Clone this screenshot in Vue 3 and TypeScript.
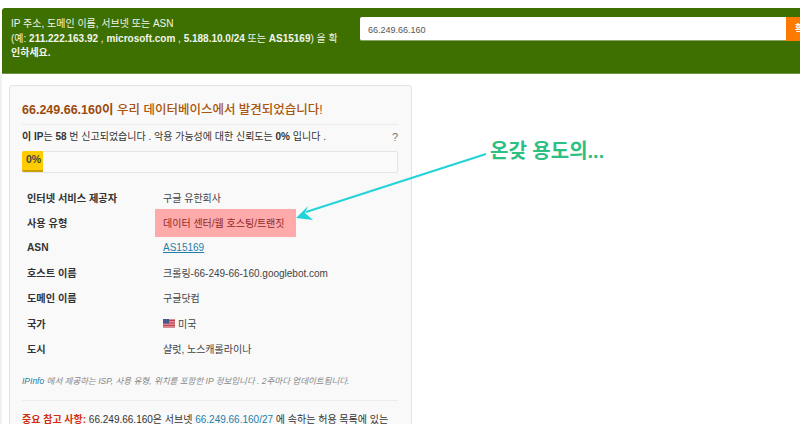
<script setup lang="ts">
interface Row { label: string; value: string; kind?: 'hl' | 'link' | 'flag' }
const rows: Row[] = [
  { label: '인터넷 서비스 제공자', value: '구글 유한회사' },
  { label: '사용 유형', value: '데이터 센터/웹 호스팅/트랜짓', kind: 'hl' },
  { label: 'ASN', value: 'AS15169', kind: 'link' },
  { label: '호스트 이름', value: '크롤링-66-249-66-160.googlebot.com' },
  { label: '도메인 이름', value: '구글닷컴' },
  { label: '국가', value: '미국', kind: 'flag' },
  { label: '도시', value: '샬럿, 노스캐롤라이나' },
]
</script>

<template>
  <div class="page">
    <header class="hero">
      <p class="hero-text">
        IP 주소, 도메인 이름, 서브넷 또는 ASN<br />
        (예: <b>211.222.163.92</b> , <b>microsoft.com</b> , <b>5.188.10.0/24</b> 또는 <b>AS15169</b>) 을 확<br />
        <b>인하세요.</b>
      </p>
      <div class="search">
        <div class="input">66.249.66.160</div>
        <div class="btn">확인</div>
      </div>
    </header>

    <main class="body">
      <section class="card">
        <h3 class="title"><b>66.249.66.160이</b> 우리 데이터베이스에서 발견되었습니다!</h3>
        <div class="summary">
          <span><b>이 IP</b>는 <b>58</b> 번 신고되었습니다 . 악용 가능성에 대한 신뢰도는 <b>0%</b> 입니다 .</span>
          <span class="q">?</span>
        </div>
        <div class="progress"><div class="bar">0%</div></div>
        <div class="table">
          <div v-for="r in rows" :key="r.label" class="row">
            <div class="label">{{ r.label }}</div>
            <div class="value" :class="r.kind">
              <svg v-if="r.kind === 'flag'" class="flag" viewBox="0 0 12 9" width="12" height="9">
                <rect width="12" height="9" fill="#d98a92" />
                <path d="M0 1.500h12M0 4h12M0 6.500h12" stroke="#c0414f" stroke-width="1" />
                <rect width="6" height="4.500" fill="#4a5a8c" />
              </svg>
              <a v-if="r.kind === 'link'">{{ r.value }}</a>
              <span v-else>{{ r.value }}</span>
            </div>
          </div>
        </div>
        <p class="note"><a>IPInfo</a> 에서 제공하는 ISP, 사용 유형, 위치를 포함한 IP 정보입니다 . 2주마다 업데이트됩니다.</p>
        <p class="important">
          <b>중요 참고 사항:</b> 66.249.66.160은 서브넷 <a>66.249.66.160/27</a> 에 속하는 허용 목록에 있는
        </p>
      </section>
    </main>

    <div class="callout">온갖 용도의...</div>
    <svg class="arrow" width="800" height="424" viewBox="0 0 800 424">
      <path d="M486 154 L306 212" stroke="#22d3d8" stroke-width="2" fill="none" />
      <path d="M296 218 L308 206 L305 213 L313 220 Z" fill="#22d3d8" />
    </svg>
  </div>
</template>

<style scoped>
.page {
  position: relative;
  width: 800px;
  height: 424px;
  overflow: hidden;
  background: #fff;
  padding-top: 8px;
  box-sizing: border-box;
  font-family: "Liberation Sans", "Noto Sans CJK KR", sans-serif;
  color: #333;
}
.hero {
  margin-left: 2px;
  height: 66px;
  background: #3d7000;
  border-radius: 3px 0 0 0;
  display: flex;
  box-sizing: border-box;
  padding: 9px 0 0 9px;
  color: #f2f5ec;
  border-bottom: 1px solid #6f9440;
}
.hero-text {
  margin: 0;
  flex: none;
  width: 349px;
  font-size: 10px;
  line-height: 14.500px;
  white-space: nowrap;
}
.search { display: flex; height: 24px; flex: none; width: 440px; }
.input {
  width: 426px;
  flex: none;
  height: 24px;
  background: #fff;
  border-radius: 2px 0 0 2px;
  font-size: 9px;
  line-height: 26px;
  padding-left: 8px;
  box-sizing: border-box;
  color: #555;
  border-bottom: 1px solid #8aa468;
}
.btn {
  flex: 1;
  background: #ff7a00;
  color: #fff;
  font-size: 10px;
  font-weight: bold;
  line-height: 24px;
  padding-left: 9px;
  overflow: hidden;
  white-space: nowrap;
}
.body {
  padding: 11px 0 0 7px;
  border-left: 2px solid #f0f0f0;
  height: 350px;
  box-sizing: border-box;
}
.card {
  width: 403px;
  height: 400px;
  box-sizing: border-box;
  background: #f9f9f9;
  border: 1px solid #e2e2e2;
  border-radius: 3px;
  padding: 16px 13px 0 12px;
}
.title {
  margin: 0;
  font-size: 12.500px;
  line-height: 16px;
  font-weight: 500;
  color: #a9560e;
  padding-bottom: 6px;
  border-bottom: 1px solid #ececec;
}
.title b { color: #9c4a0c; font-weight: bold; }
.summary {
  display: flex;
  justify-content: space-between;
  font-size: 10px;
  line-height: 14px;
  margin-top: 5px;
  color: #333;
}
.q { color: #777; font-size: 11px; }
.progress {
  margin-top: 7px;
  height: 22px;
  width: 376px;
  background: #fbfbfb;
  border: 1px solid #e4e4e4;
  border-radius: 2px;
  box-sizing: border-box;
}
.bar {
  width: 21px;
  height: 21px;
  background: #ffcc00;
  border-bottom: 2px solid #c9a000;
  box-sizing: border-box;
  font-size: 10.500px;
  font-weight: bold;
  line-height: 17px;
  color: #444;
  padding-left: 4px;
  margin-left: -1px;
  margin-top: -1px;
  border-radius: 2px 0 0 2px;
}
.table { margin-top: 12px; }
.row {
  display: flex;
  height: 25.100px;
  align-items: center;
  font-size: 10px;
}
.label {
  width: 128px;
  margin-left: 5px;
  font-weight: bold;
  font-size: 10.200px;
  color: #333;
}
.value {
  color: #444;
  display: flex;
  align-items: center;
  padding-left: 8px;
}
.value.hl {
  background: #ffaaaa;
  width: 141px;
  height: 28px;
  box-sizing: border-box;
  color: #8a2a2a;
  white-space: nowrap;
  flex: none;
}
.value a {
  color: #1f7fa8;
  text-decoration: underline;
}
.flag { margin-right: 3px; }
.note {
  margin: 14px 0 0;
  font-size: 8.500px;
  font-style: italic;
  color: #888;
  line-height: 12px;
  padding-bottom: 13px;
  border-bottom: 1px solid #ececec;
}
.note a { color: #1f7fa8; }
.important {
  margin: 12px 0 0;
  font-size: 10px;
  line-height: 14px;
  white-space: nowrap;
}
.important b { color: #d03010; }
.important a { color: #1f7fa8; }
.callout {
  position: absolute;
  left: 490px;
  top: 139px;
  font-size: 20px;
  line-height: 24px;
  font-weight: bold;
  color: #2dc083;
  white-space: nowrap;
}
.arrow {
  position: absolute;
  left: 0;
  top: 0;
  pointer-events: none;
}
</style>
